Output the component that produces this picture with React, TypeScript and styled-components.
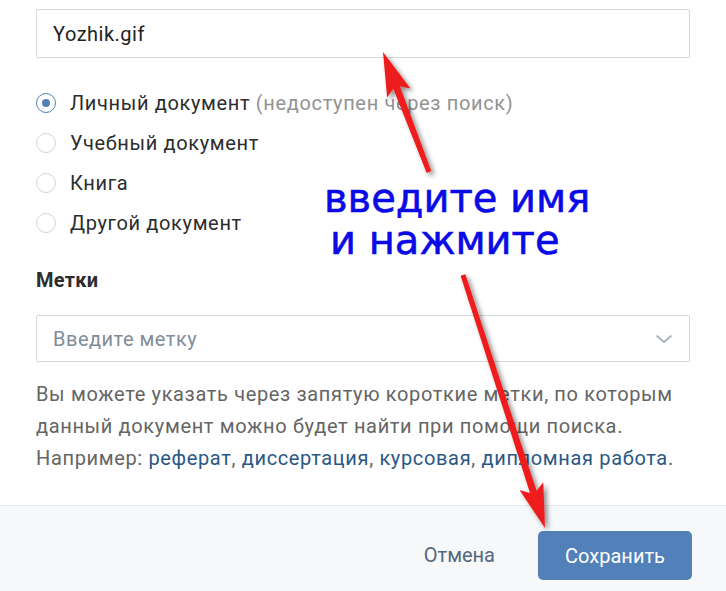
import React from 'react';
import styled, { createGlobalStyle } from 'styled-components';

const GlobalStyle = createGlobalStyle`
  html, body {
    margin: 0;
    padding: 0;
    background: #fff;
  }
  body {
    font-family: Roboto, "Open Sans", "Liberation Sans", sans-serif;
    color: #222;
  }
`;

const Page = styled.div`
  position: relative;
  width: 726px;
  height: 591px;
  overflow: hidden;
  display: flex;
  flex-direction: column;
`;

const Body = styled.div`
  flex: 1;
  padding: 9px 36px 0;
`;

const Field = styled.div<{ placeholder?: boolean }>`
  box-sizing: border-box;
  height: ${p => (p.placeholder ? 47 : 49)}px;
  border: 1px solid #d3d9de;
  border-radius: 2px;
  display: flex;
  align-items: center;
  justify-content: space-between;
  padding: 0 16px 0 16px;
  font-size: 20px;
  letter-spacing: 0.5px;
  color: ${p => (p.placeholder ? '#818c99' : '#222')};
`;

const RadioList = styled.div`
  margin-top: 25px;
  display: flex;
  flex-direction: column;
`;

const RadioRow = styled.div`
  height: 40px;
  display: flex;
  align-items: center;
  gap: 14px;
  font-size: 20px;
  letter-spacing: 0.65px;
  color: #2c2d2e;
`;

const RadioCircle = styled.span<{ checked?: boolean }>`
  box-sizing: border-box;
  width: 20px;
  height: 20px;
  border-radius: 50%;
  border: 1.5px solid ${p => (p.checked ? '#5181b8' : '#cfd4d9')};
  display: flex;
  align-items: center;
  justify-content: center;
  &::after {
    content: '';
    width: 8px;
    height: 8px;
    border-radius: 50%;
    background: #5181b8;
    display: ${p => (p.checked ? 'block' : 'none')};
  }
`;

const Hint = styled.span`
  color: #939393;
`;

const Label = styled.div`
  margin-top: 22px;
  font-size: 20px;
  font-weight: 700;
  letter-spacing: 0.3px;
  color: #2c2d2e;
  height: 30px;
  line-height: 30px;
`;

const TagsField = styled(Field)`
  margin-top: 20px;
`;

const Help = styled.p`
  margin: 16px 0 0;
  font-size: 20px;
  letter-spacing: 0.65px;
  line-height: 32px;
  color: #656565;
  white-space: nowrap;
`;

const HelpLink = styled.span`
  color: #2a5885;
`;

const Footer = styled.div`
  height: 86px;
  box-sizing: border-box;
  border-top: 1px solid #e7e8ec;
  background: #f7f8fa;
  display: flex;
  justify-content: flex-end;
  align-items: flex-start;
  padding: 25px 34px 0 0;
  gap: 43px;
`;

const CancelButton = styled.span`
  height: 49px;
  line-height: 49px;
  font-size: 20px;
  color: #55677d;
`;

const SaveButton = styled.span`
  width: 154px;
  height: 49px;
  border-radius: 5px;
  background: #5181b8;
  color: #fff;
  font-size: 20px;
  display: flex;
  align-items: center;
  justify-content: center;
`;

const Callout = styled.div`
  position: absolute;
  left: 324px;
  top: 177px;
  font-family: "DejaVu Sans", Verdana, sans-serif;
  font-size: 40px;
  line-height: 42px;
  color: #0a0ae6;
  -webkit-text-stroke: 0.6px #0a0ae6;
`;

const CalloutLine = styled.div<{ indent?: number }>`
  padding-left: ${p => p.indent ?? 0}px;
  white-space: nowrap;
`;

const ArrowLayer = styled.svg`
  position: absolute;
  left: 0;
  top: 0;
  pointer-events: none;
`;

type ArrowProps = { x1: number; y1: number; x2: number; y2: number };

const Arrow = ({ x1, y1, x2, y2 }: ArrowProps) => {
  const dx = x2 - x1;
  const dy = y2 - y1;
  const len = Math.hypot(dx, dy);
  const ux = dx / len;
  const uy = dy / len;
  const nx = -uy;
  const ny = ux;
  const head = 44;
  const hw = 12.5;
  const bx = x2 - ux * head;
  const by = y2 - uy * head;
  const pt = (x: number, y: number) => `${x.toFixed(1)},${y.toFixed(1)}`;
  const pts = [
    pt(x1 + nx * 2.5, y1 + ny * 2.5),
    pt(bx + ux * 6 + nx * 3.5, by + uy * 6 + ny * 3.5),
    pt(bx + nx * hw, by + ny * hw),
    pt(x2, y2),
    pt(bx - nx * hw, by - ny * hw),
    pt(bx + ux * 6 - nx * 3.5, by + uy * 6 - ny * 3.5),
    pt(x1 - nx * 2.5, y1 - ny * 2.5),
  ].join(' ');
  return <polygon points={pts} fill="#ee1c1c" filter="url(#shadow)" strokeLinejoin="round" />;
};

const radios = [
  { label: 'Личный документ', hint: ' (недоступен через поиск)', checked: true },
  { label: 'Учебный документ' },
  { label: 'Книга' },
  { label: 'Другой документ' },
];

export default function App() {
  return (
    <Page>
      <GlobalStyle />
      <Body>
        <Field>Yozhik.gif</Field>
        <RadioList>
          {radios.map((r, i) => (
            <RadioRow key={i}>
              <RadioCircle checked={r.checked} />
              <span>
                {r.label}
                {r.hint && <Hint>{r.hint}</Hint>}
              </span>
            </RadioRow>
          ))}
        </RadioList>
        <Label>Метки</Label>
        <TagsField placeholder>
          Введите метку
          <svg width="18" height="10" viewBox="0 0 18 10">
            <path d="M2 2 L9 8 L16 2" fill="none" stroke="#a8b1bb" strokeWidth="1.8" strokeLinecap="round" strokeLinejoin="round" />
          </svg>
        </TagsField>
        <Help>
          Вы можете указать через запятую короткие метки, по которым
          <br />
          данный документ можно будет найти при помощи поиска.
          <br />
          Например: <HelpLink>реферат</HelpLink>, <HelpLink>диссертация</HelpLink>, <HelpLink>курсовая</HelpLink>, <HelpLink>дипломная работа</HelpLink>.
        </Help>
      </Body>
      <Footer>
        <CancelButton>Отмена</CancelButton>
        <SaveButton>Сохранить</SaveButton>
      </Footer>
      <Callout>
        <CalloutLine>введите имя</CalloutLine>
        <CalloutLine indent={6}>и нажмите</CalloutLine>
      </Callout>
      <ArrowLayer width="726" height="591" viewBox="0 0 726 591">
        <defs>
          <filter id="shadow" x="-50%" y="-50%" width="200%" height="200%">
            <feDropShadow dx="3" dy="3" stdDeviation="2.5" floodColor="#000" floodOpacity="0.45" />
          </filter>
        </defs>
        <Arrow x1={429} y1={172} x2={383} y2={52} />
        <Arrow x1={463} y1={275} x2={545} y2={528} />
      </ArrowLayer>
    </Page>
  );
}
